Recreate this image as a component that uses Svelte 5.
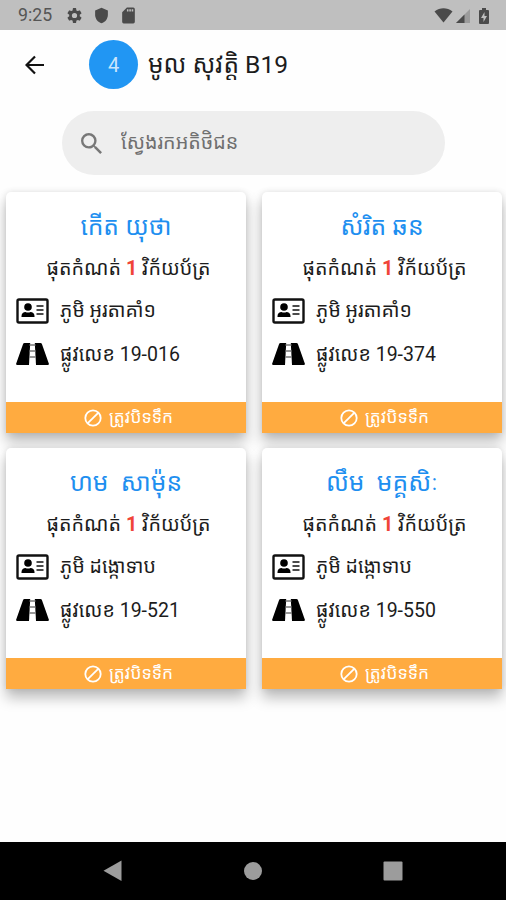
<script lang="ts">
	type Customer = {
		name: string;
		unpaid: number;
		village: string;
		street: string;
	};

	const title = 'មូល សុវត្តិ B19';

	const customers: Customer[] = [
		{ name: 'កើត យុថា', unpaid: 1, village: 'អូរតាគាំ១', street: '19-016' },
		{ name: 'សំរិត ឆន', unpaid: 1, village: 'អូរតាគាំ១', street: '19-374' },
		{ name: 'ហម  សាម៉ុន', unpaid: 1, village: 'ដង្កោទាប', street: '19-521' },
		{ name: 'លឹម  មគ្គសិៈ', unpaid: 1, village: 'ដង្កោទាប', street: '19-550' }
	];

	let query = '';

	$: visible = customers.filter((c) => c.name.includes(query));
</script>

<div class="screen">
	<div class="status-bar">
		<span class="clock">9:25</span>
		<svg class="gear" viewBox="0 0 24 24">
			<path fill-rule="evenodd" d="M19.4 13a7.6 7.6 0 0 0 0-2l2.3-1.7a.5.5 0 0 0 .1-.7l-2.1-3.6a.5.5 0 0 0-.7-.2l-2.6 1a8 8 0 0 0-1.7-1L14.3 2a.5.5 0 0 0-.5-.5h-3.6a.5.5 0 0 0-.5.5l-.4 2.8a8 8 0 0 0-1.7 1L5 4.8a.5.5 0 0 0-.7.2L2.2 8.6a.5.5 0 0 0 .1.7L4.6 11a7.6 7.6 0 0 0 0 2l-2.3 1.7a.5.5 0 0 0-.1.7L4.3 19a.5.5 0 0 0 .7.2l2.6-1a8 8 0 0 0 1.7 1l.4 2.8a.5.5 0 0 0 .5.5h3.6a.5.5 0 0 0 .5-.5l.4-2.8a8 8 0 0 0 1.7-1l2.6 1a.5.5 0 0 0 .7-.2l2.1-3.6a.5.5 0 0 0-.1-.7zM12 15.7a3.7 3.7 0 1 1 0-7.4 3.7 3.7 0 0 1 0 7.4z" />
		</svg>
		<svg class="shield" viewBox="0 0 24 24">
			<path d="M12 1 3 5v6c0 5.55 3.84 10.74 9 12 5.16-1.26 9-6.45 9-12V5z" />
		</svg>
		<svg class="sd-card" viewBox="0 0 24 24">
			<path d="M18 2h-8L4 8v12a2 2 0 0 0 2 2h12a2 2 0 0 0 2-2V4a2 2 0 0 0-2-2zm-6 5h-2V4h2zm3 0h-2V4h2zm3 0h-2V4h2z" />
		</svg>
		<div class="signals">
			<svg class="wifi" viewBox="0 0 18 15">
				<path d="M0 3.5C5.5-.9 12.5-.9 18 3.5L9 14.500z" />
			</svg>
			<svg class="cell" viewBox="0 0 14 14">
				<path class="faint" d="M14 0v14H0z" />
				<path d="M8.500 5.500V14H0z" />
			</svg>
			<svg class="battery" viewBox="0 0 10 16">
				<path fill-rule="evenodd" d="M3 0h4v2h2a1 1 0 0 1 1 1v12a1 1 0 0 1-1 1H1a1 1 0 0 1-1-1V3a1 1 0 0 1 1-1h2zM5.500 4 2 10h2.500v4L8 8H5.500z" />
			</svg>
		</div>
	</div>

	<header class="app-bar">
		<button class="back" aria-label="Back">
			<svg viewBox="0 0 20 20">
				<path d="M19 10H2M10 1.500 1.500 10 10 18.500" />
			</svg>
		</button>
		<span class="count">{customers.length}</span>
		<h1>{title}</h1>
	</header>

	<label class="search">
		<svg viewBox="3 3 17.500 17.500">
			<path d="M15.500 14h-.79l-.28-.27A6.471 6.471 0 0 0 16 9.500 6.500 6.500 0 1 0 9.500 16c1.610 0 3.090-.59 4.230-1.570l.27.280v.79l5 4.990L20.490 19zm-6 0C7.010 14 5 11.990 5 9.500S7.010 5 9.500 5 14 7.010 14 9.500 11.990 14 9.500 14z" />
		</svg>
		<input type="text" placeholder="ស្វែងរកអតិថិជន" bind:value={query} />
	</label>

	<main class="grid">
		{#each visible as customer}
			<article class="card">
				<h2>{customer.name}</h2>
				<p class="unpaid">ផុតកំណត់ <b>{customer.unpaid}</b> វិក័យប័ត្រ</p>
				<div class="row">
					<svg class="id-card" viewBox="0 0 33 26">
						<rect class="frame" x="1.500" y="1.500" width="30" height="23" rx="1.500" />
						<circle cx="12" cy="9" r="3.800" />
						<path d="M5.500 19v-1c0-2.600 2-4 4-4 1.500.8 3.500.8 5 0 2 0 4 1.400 4 4v1z" />
						<path class="lines" d="M20.500 8h7M20.500 12h7M20.500 16h7" />
					</svg>
					<span>ភូមិ {customer.village}</span>
				</div>
				<div class="row">
					<svg class="road" viewBox="0 0 33 22">
						<path d="M8.500 0h5.700L13 22H1.200q-1.400 0-1-1.500L7.100 1Q7.500 0 8.500 0z" />
						<path d="M24.500 0h-5.700L20 22h11.800q1.400 0 1-1.500L25.900 1q-.4-1-1.400-1z" />
						<path class="dashes" d="M13.500 2h6M13.500 8h6M13.300 14h6.400" />
					</svg>
					<span>ផ្លូវលេខ {customer.street}</span>
				</div>
				<button class="cut-off">
					<svg viewBox="0 0 18 18">
						<circle cx="9" cy="9" r="7.700" />
						<path d="M3.800 14.200 14.200 3.800" />
					</svg>
					<span>ត្រូវបិទទឹក</span>
				</button>
			</article>
		{/each}
	</main>

	<nav class="nav-bar">
		<svg viewBox="0 0 20 22"><path d="M18.500.500v20.500L.500 10.800z" /></svg>
		<svg viewBox="0 0 20 22"><circle cx="10" cy="11" r="9" /></svg>
		<svg viewBox="0 0 20 22"><rect x=".500" y="1.500" width="19" height="19" rx="1" /></svg>
	</nav>
</div>

<style>
	:global(body) {
		margin: 0;
		background: #fff;
	}

	.screen {
		display: flex;
		flex-direction: column;
		width: 506px;
		height: 900px;
		overflow: hidden;
		background: #fefefe;
		color: #1c1c1c;
		font-family: Roboto, 'Noto Sans Khmer', 'Khmer OS', 'DejaVu Sans', sans-serif;
	}

	svg {
		display: block;
		flex: none;
	}

	button {
		padding: 0;
		border: none;
		background: none;
		font: inherit;
		color: inherit;
	}

	/* Status bar */
	.status-bar {
		display: flex;
		align-items: center;
		flex: none;
		box-sizing: border-box;
		height: 30px;
		padding: 1px 17px 0 18px;
		background: #bfbfbf;
		color: #555;
		fill: #4a4a4a;
	}

	.clock {
		width: 48px;
		font-size: 17.7px;
		line-height: 29px;
	}

	.gear {
		width: 17px;
		height: 17px;
	}

	.shield {
		width: 17px;
		height: 17px;
		margin-left: 10px;
	}

	.sd-card {
		width: 19px;
		height: 19px;
		margin-left: 9px;
	}

	.signals {
		display: flex;
		align-items: center;
		margin-left: auto;
	}

	.wifi {
		width: 19px;
		height: 15px;
	}

	.cell {
		width: 14px;
		height: 14px;
		margin-left: 3px;
	}

	.faint {
		opacity: 0.3;
	}

	.battery {
		width: 10px;
		height: 16px;
		margin-left: 9px;
	}

	/* App bar */
	.app-bar {
		display: flex;
		align-items: center;
		flex: none;
		height: 69px;
		padding-left: 25px;
	}

	.back svg {
		width: 20px;
		height: 20px;
		fill: none;
		stroke: #111;
		stroke-width: 2.2;
	}

	.count {
		width: 49px;
		height: 49px;
		margin-left: 44px;
		border-radius: 50%;
		background: #2196f3;
		color: #c9e5fc;
		font-size: 20px;
		line-height: 50px;
		text-align: center;
	}

	h1 {
		margin: 0 0 0 10px;
		font-size: 24.6px;
		font-weight: 400;
		line-height: 60px;
		white-space: nowrap;
	}

	/* Search */
	.search {
		display: flex;
		align-items: center;
		flex: none;
		box-sizing: border-box;
		width: 383px;
		height: 64px;
		margin: 12px 0 0 62px;
		padding: 0 19px;
		border-radius: 32px;
		background: #eee;
	}

	.search svg {
		width: 21px;
		height: 21px;
		fill: #777;
	}

	input {
		flex: 1;
		min-width: 0;
		height: 50px;
		margin-left: 19px;
		padding: 0;
		border: none;
		outline: none;
		background: none;
		font: 400 19.7px/50px Roboto, 'Noto Sans Khmer', 'Khmer OS', 'DejaVu Sans', sans-serif;
	}

	input::placeholder {
		color: #707070;
		opacity: 1;
	}

	/* Cards */
	.grid {
		display: grid;
		grid-template-columns: 240px 240px;
		grid-auto-rows: 241px;
		gap: 15px 16px;
		align-content: start;
		flex: 1;
		padding: 17px 4px 0 6px;
	}

	.card {
		display: flex;
		flex-direction: column;
		border-radius: 5px 5px 0 0;
		background: #fff;
		box-shadow: 0 9px 14px rgba(0, 0, 0, 0.26), 0 0 6px rgba(0, 0, 0, 0.1);
	}

	h2 {
		margin: 13px 0 0;
		color: #1e8ff0;
		font-size: 24.7px;
		font-weight: 400;
		line-height: 44px;
		text-align: center;
		white-space: pre;
	}

	.unpaid {
		margin: 0 0 0 5px;
		font-size: 19.7px;
		line-height: 40px;
		text-align: center;
		white-space: nowrap;
	}

	.unpaid b {
		color: #f04438;
	}

	.row {
		display: flex;
		align-items: center;
		gap: 11.5px;
		height: 43.5px;
		padding-left: 9.5px;
		font-size: 19.5px;
		line-height: 43px;
		white-space: nowrap;
	}

	.id-card {
		width: 33px;
		height: 26px;
	}

	.frame {
		fill: none;
		stroke: #111;
		stroke-width: 2.4;
	}

	.lines {
		stroke: #111;
		stroke-width: 1.6;
	}

	.road {
		width: 33px;
		height: 22px;
	}

	.dashes {
		stroke: #777;
		stroke-width: 1.4;
	}

	.cut-off {
		display: flex;
		align-items: center;
		justify-content: center;
		gap: 7px;
		flex: none;
		box-sizing: border-box;
		height: 31px;
		margin-top: auto;
		padding-left: 5px;
		background: #ffab40;
		color: #fff;
		font-size: 17.3px;
		line-height: 31px;
		white-space: nowrap;
	}

	.cut-off svg {
		width: 18px;
		height: 18px;
		fill: none;
		stroke: #fff;
		stroke-width: 1.8;
	}

	/* System navigation */
	.nav-bar {
		display: flex;
		align-items: center;
		justify-content: space-between;
		flex: none;
		box-sizing: border-box;
		height: 58px;
		padding: 0 103px;
		background: #000;
		fill: #9c9c9c;
	}

	.nav-bar svg {
		width: 20px;
		height: 22px;
	}
</style>
